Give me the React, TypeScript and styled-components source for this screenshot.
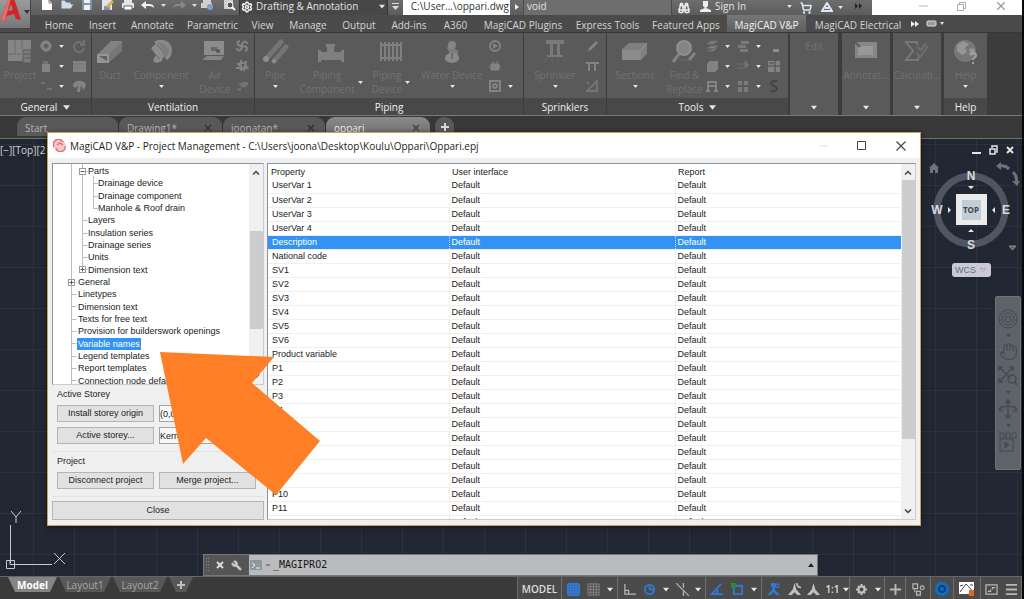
import React from 'react';
import styled, { createGlobalStyle, css } from 'styled-components';
import { Hand, Settings, ShoppingCart, Wrench, Binoculars } from 'lucide-react';

const ui = '"Open Sans", "Noto Sans", sans-serif';
const classic = '"Liberation Sans", Arial, sans-serif';

const GlobalStyle = createGlobalStyle`
  * { box-sizing: border-box; }
  html, body { margin: 0; height: 100%; overflow: hidden; background: #060708; }
  #root { height: 100%; }
  button, input, select { font: inherit; color: inherit; margin: 0; padding: 0; border: 0; background: none; border-radius: 0; }
  button { white-space: nowrap; }
  svg { display: block; flex: none; }
`;

const Shell = styled.div`
  position: relative;
  display: flex;
  flex-direction: column;
  height: 100%;
  margin-right: 2px;
  font-family: ${ui};
  font-size: 10px;
  color: #e2e2e2;
  background: #3a3a3a;
`;

/* ---------- title bar ---------- */
const TitleBar = styled.header`
  display: flex;
  align-items: stretch;
  flex: none;
  height: 15px;
  padding-left: 37px;
  background: linear-gradient(#6d6d6d, #5c5c5c);
  line-height: 13px;
  overflow: hidden;
`;
const AppButton = styled.button`
  position: absolute;
  z-index: 2;
  left: 0;
  top: 0;
  width: 31px;
  height: 29px;
  background: linear-gradient(#9b9b9b, #777);
  border-right: 1px solid #444;
  border-bottom: 1px solid #444;
`;
const Slot = styled.button<{ $w: number }>`
  display: flex;
  align-items: center;
  justify-content: center;
  flex: none;
  width: ${(p) => p.$w}px;
`;
const TitleSlot = styled(Slot)`
  align-items: flex-start;
`;
const Workspace = styled.label`
  display: flex;
  align-items: center;
  gap: 3px;
  width: 149px;
  padding: 0 2px 2px 1px;
  background: #474747;
  border-left: 1px solid #333;
  border-right: 1px solid #333;
  select { flex: 1; min-width: 0; height: 14px; line-height: 13px; appearance: none; outline: 0; }
`;
const FileName = styled.div`
  width: 107px;
  padding-right: 1px;
  background: #fff;
  color: #333;
  text-align: right;
  white-space: nowrap;
`;
const SearchBox = styled.input`
  width: 149px;
  padding: 0 3px 2px;
  background: #6e6e6e;
  border: solid #4a4a4a;
  border-width: 0 1px;
  line-height: 13px;
`;
const Account = styled.button`
  display: flex;
  align-items: center;
  gap: 4px;
  width: 98px;
  padding: 0 2px 2px 4px;
  span { flex: 1; text-align: left; }
`;
const WindowButtons = styled.div`
  display: flex;
  flex: 1;
  justify-content: flex-end;
  padding: 0 1px 3px 0;
  background: #fff;
  color: #aaa;
`;

/* ---------- ribbon ---------- */
const TabRow = styled.nav`
  display: flex;
  flex: none;
  height: 18px;
  padding-left: 37px;
  background: #4b4b4b;
  border-bottom: 1px solid #363636;
`;
const RibbonTab = styled.button<{ $w: number; $on?: boolean }>`
  flex: none;
  width: ${(p) => p.$w}px;
  height: 17px;
  padding-top: 3px;
  line-height: 14px;
  color: #d4d4d4;
  ${(p) => p.$on && css`
    color: #f0f0f0;
    background: linear-gradient(#777, #5e5e5e);
  `}
`;
const Ribbon = styled.section`
  display: flex;
  flex: none;
  height: 83px;
  background: #3c3c3c;
  border-bottom: 1px solid #7a7a7a;
`;
const Panel = styled.section<{ $w: number; $gap?: number }>`
  display: flex;
  flex-direction: column;
  flex: none;
  width: ${(p) => p.$w}px;
  margin-right: ${(p) => p.$gap ?? 1}px;
  background: #5a5a5a;
`;
const PanelBody = styled.div`
  display: flex;
  flex: 1;
  min-height: 0;
  padding-top: 3px;
`;
const PanelTitle = styled.button<{ $plain?: boolean }>`
  display: flex;
  align-items: center;
  justify-content: center;
  gap: 6px;
  flex: none;
  height: 17px;
  padding-top: 1px;
  line-height: 16px;
  color: #f0f0f0;
  background: ${(p) => (p.$plain ? 'none' : '#484848')};
`;
const BigTool = styled.button<{ $w: number }>`
  display: flex;
  flex-direction: column;
  align-items: center;
  gap: 3px;
  flex: none;
  width: ${(p) => p.$w}px;
  padding-top: 3px;
  color: #727272;
  line-height: 14px;
`;
const ToolLabel = styled.span`
  display: flex;
  align-items: center;
  gap: 3px;
`;
const ToolLines = styled.span`
  display: flex;
  flex-direction: column;
`;
const SmallCol = styled.div<{ $w: number }>`
  display: flex;
  flex-direction: column;
  flex: none;
  width: ${(p) => p.$w}px;
  color: #838383;
`;
const SmallTool = styled.button`
  display: flex;
  align-items: center;
  gap: 6px;
  height: 20px;
  color: inherit;
`;

/* ---------- document tabs ---------- */
const DocTabs = styled.nav`
  display: flex;
  align-items: flex-end;
  flex: none;
  height: 23px;
  padding: 0 0 2px 16px;
  background: #383838;
  border-bottom: 1px solid #707070;
`;
const DocTab = styled.button<{ $w: number; $on?: boolean }>`
  display: flex;
  align-items: center;
  justify-content: space-between;
  width: ${(p) => p.$w}px;
  height: 19px;
  padding: 2px 10px 0 8px;
  border-radius: 9px 9px 0 0;
  color: ${(p) => (p.$on ? '#eee' : '#b4b4b4')};
  background: ${(p) => (p.$on ? 'linear-gradient(#8a8a8a, #6f6f6f)' : '#595959')};
  border-left: 1px solid #333;
`;
const AddTab = styled(DocTab)`
  justify-content: center;
  margin-left: 4px;
  padding: 0;
`;

/* ---------- drawing area ---------- */
const Canvas = styled.main`
  position: relative;
  flex: 1;
  min-height: 0;
  background-color: #212732;
  background-image:
    linear-gradient(90deg, #2b323d 1px, transparent 1px),
    linear-gradient(#2b323d 1px, transparent 1px),
    linear-gradient(90deg, #232934 1px, transparent 1px),
    linear-gradient(#232934 1px, transparent 1px);
  background-size: 41px 41px, 41px 41px, 8px 8px, 8px 8px;
  background-position: 33px 5px;
`;
const ViewLabel = styled.div`
  position: absolute;
  left: 0;
  top: 4px;
  line-height: 14px;
  color: #d0d4d8;
`;
const ViewTools = styled.aside`
  position: absolute;
  right: 0;
  top: 5px;
  width: 98px;
  display: flex;
  flex-direction: column;
`;
const MdiButtons = styled.div`
  display: flex;
  justify-content: flex-end;
  gap: 8px;
  padding-right: 8px;
`;
const Wcs = styled.button`
  display: flex;
  align-items: center;
  justify-content: space-between;
  width: 39px;
  height: 14px;
  margin: 0 0 0 28px;
  padding: 0 5px 0 3px;
  border-radius: 3px;
  background: #c9cad6;
  color: #6a6c7a;
  font: 9px/12px ${classic};
`;
const NavBar = styled.nav`
  position: absolute;
  right: 1px;
  top: 157px;
  width: 26px;
  height: 174px;
  display: flex;
  flex-direction: column;
  align-items: center;
  padding-top: 12px;
  gap: 5px;
  color: #434b54;
  background: #5c6369;
  border: 1px solid #6c7379;
  border-radius: 2px;
`;
const Ucs = styled.svg`
  position: absolute;
  left: 4px;
  bottom: 6px;
`;
const CommandLine = styled.form`
  position: absolute;
  left: 203px;
  right: 204px;
  bottom: 0;
  height: 22px;
  display: flex;
  align-items: center;
  gap: 7px;
  padding: 0 3px 0 2px;
  color: #d8d8d8;
  background: linear-gradient(90deg, #555 45px, #b9bbbd 45px);
  border: 1px solid #777;
  input { flex: 1; min-width: 0; outline: 0; margin-left: -5px; color: #151515; font: 10px/18px "DejaVu Sans Mono", monospace; }
`;

/* ---------- bottom bar ---------- */
const BottomBar = styled.footer`
  display: flex;
  justify-content: space-between;
  flex: none;
  height: 23px;
  background: #3a3a3a;
  border-top: 1px solid #666;
`;
const LayoutTabs = styled.nav`
  display: flex;
  padding-left: 8px;
  gap: 2px;
`;
const LayoutTab = styled.button<{ $w: number; $on?: boolean }>`
  display: flex;
  align-items: center;
  justify-content: center;
  width: ${(p) => p.$w}px;
  height: 15px;
  padding-top: 1px;
  line-height: 15px;
  font-weight: ${(p) => (p.$on ? 700 : 400)};
  color: ${(p) => (p.$on ? '#fff' : '#a6a6a6')};
  background: ${(p) => (p.$on ? '#858585' : '#585858')};
  clip-path: polygon(0 0, 100% 0, calc(100% - 7px) 100%, 7px 100%);
`;
const StatusBar = styled.div`
  display: flex;
  align-items: stretch;
  background: #4b4b4b;
  border-left: 1px solid #6a6a6a;
`;
const StatusGroup = styled.div`
  display: flex;
  align-items: stretch;
  padding-top: 2px;
  border-right: 1px solid #6e6e6e;
  font-weight: 600;
  color: #dedede;
`;

/* ---------- dialog ---------- */
const Dialog = styled.section`
  position: absolute;
  z-index: 3;
  left: 47px;
  right: 101px;
  top: 132px;
  bottom: 73px;
  display: flex;
  flex-direction: column;
  border: 1px solid #c3a25a;
  background: #f1f0f0;
  color: #222;
  box-shadow: 0 1px 5px #0008;
  font: 9px/12px ${classic};
`;
const DialogTitle = styled.header`
  display: flex;
  align-items: center;
  flex: none;
  height: 25px;
  padding-left: 5px;
  gap: 4px;
  background: #fff;
  font: 10px/24px ${ui};
  color: #222;
  h1 { flex: 1; margin: 0; font: inherit; white-space: nowrap; }
`;
const DialogButtons = styled.div`
  display: flex;
  align-self: stretch;
`;
const DialogBody = styled.div`
  display: flex;
  flex: 1;
  gap: 3px;
  min-height: 0;
  padding: 5px 4px 5px 4px;
`;
const Side = styled.div`
  display: flex;
  flex-direction: column;
  flex: none;
  width: 212px;
`;
const Framed = styled.div`
  display: flex;
  min-height: 0;
  overflow: hidden;
  background: #fff;
  border: 1px solid #8f939b;
  border-right-color: #c9cbd0;
  border-bottom-color: #c9cbd0;
`;
const TreeFrame = styled(Framed)`
  flex: 1;
`;
const TreeList = styled.ul`
  position: relative;
  display: grid;
  grid-auto-rows: 1fr;
  flex: 1;
  margin: 0 0 -3px;
  padding: 1px 0 0;
  list-style: none;
`;
const Guides = styled.svg`
  position: absolute;
  left: 0;
  top: 0;
`;
const TreeItem = styled.li<{ $depth: number }>`
  display: flex;
  align-items: center;
  min-height: 0;
  padding-left: ${(p) => 24 + p.$depth * 10}px;
`;
const TreeLabel = styled.button<{ $on?: boolean }>`
  padding: 0 1px;
  line-height: 12px;
  ${(p) => p.$on && css`
    background: #3393f5;
    color: #fff;
  `}
`;
const Track = styled.div`
  display: flex;
  flex-direction: column;
  align-items: center;
  flex: none;
  width: 14px;
  background: #f0f0f0;
`;
const Thumb = styled.div<{ $from: number; $size: number }>`
  flex: 0 1 ${(p) => p.$size}px;
  width: 13px;
  margin-top: ${(p) => p.$from}px;
  background: #cdcdcd;
`;
const Chevron = styled.div`
  display: flex;
  align-items: center;
  justify-content: center;
  flex: none;
  height: 16px;
`;
const TrackEnd = styled(Chevron)`
  margin-top: auto;
`;
const Group = styled.fieldset`
  display: grid;
  grid-template-columns: 97px 97px;
  gap: 5px;
  margin: 0;
  padding: 3px 0 7px 5px;
  border: 0;
  border-bottom: 1px solid #e3e3e3;
  legend { float: left; grid-column: 1 / -1; padding: 0; height: 12px; }
`;
const PushButton = styled.button`
  height: 17px;
  line-height: 15px;
  background: #e1e1e1;
  border: 1px solid #b4b4b4;
`;
const CloseButton = styled(PushButton)`
  height: 19px;
  margin-top: 4px;
`;
const Field = styled.input`
  min-width: 0;
  height: 17px;
  border: 1px solid #a0a4ac;
  background: #f7f7f7;
`;
const TableFrame = styled(Framed)`
  flex: 1;
  min-width: 0;
`;
const TableClip = styled.div`
  flex: 1;
  min-width: 0;
  overflow: hidden;
`;
const Table = styled.table`
  width: 100%;
  table-layout: fixed;
  border-collapse: collapse;
  th { height: 15px; padding: 1px 0 0 3px; font-weight: 400; text-align: left; }
  td { height: 14px; padding: 0 0 0 4px; border-bottom: 1px solid #f0f0f0; line-height: 13px; }
  td + td { padding-left: 2px; border-left: 1px dotted #e2e2e2; }
`;
const Row = styled.tr<{ $on?: boolean }>`
  ${(p) => p.$on && css`
    background: #3393f5;
    color: #fff;
  `}
`;
const Pointer = styled.svg`
  position: absolute;
  z-index: 4;
  left: 160px;
  top: 352px;
`;

/* ---------- drawings ---------- */
const Down = ({ c = '#e6e6e6', s = 5 }: { c?: string; s?: number }) => (
  <svg width={s} height={s === 5 ? 3 : 5} viewBox="0 0 8 5" fill={c}><path d="M0 0h8L4 5z" /></svg>
);
const Plus = ({ c = '#d8d8d8' }) => (
  <svg width="8" height="8" viewBox="0 0 8 8" stroke={c} strokeWidth="2"><path d="M4 0v8M0 4h8" /></svg>
);
const Cross = ({ c, s = 8, w = 1.5 }: { c: string; s?: number; w?: number }) => (
  <svg width={s} height={s} viewBox="0 0 8 8" stroke={c} strokeWidth={w}><path d="M1 1l6 6M7 1l-6 6" /></svg>
);
const Arc = ({ up }: { up?: boolean }) => (
  <svg width="8" height="5" viewBox="0 0 8 5" fill="none" stroke="#444" strokeWidth="1.5"><path d={up ? 'M1 4.5l3-3 3 3' : 'M1 .5l3 3 3-3'} /></svg>
);

const big: Record<string, React.ReactNode> = {
  project: <><path d="M2 1h23v21H2z" fill="#858585" /><path d="M9 1v14M2 15h13M16 1v9" stroke="#6c6c6c" /><path d="M17 11h8v13h-8z" fill="#7b7b7b" stroke="#5a5a5a" /><path d="M18 15h6M18 19h6" stroke="#5a5a5a" /></>,
  duct: <><path d="M1 16L15 2h11v10L13 23H1z" fill="#828282" /><path d="M13 15L26 3v9L13 23z" fill="#767676" /><path d="M1 15h12v9H1z" fill="#959595" /><path d="M3 17h8v5z" fill="#606060" /></>,
  comp: <><circle cx="16" cy="10" r="9" fill="#7d7d7d" /><path d="M8 4c7-4 13 0 15 6 1 5-1 8-4 10" fill="none" stroke="#8a8a8a" strokeWidth="3" /><path d="M4 9l6-5 7 8-2 10c-5 3-8 2-9-1l3-5z" fill="#8c8c8c" /><path d="M6 13l7 7M10 6l7 8" stroke="#686868" /></>,
  air: <><path d="M3 2h20v14H3z" fill="#8c8c8c" /><path d="M10 8h6v4h-6z" fill="#676767" /><path d="M6 17h17l-3 4H1z" fill="#858585" /><circle cx="17" cy="12" r="2" fill="#555" /></>,
  pipe: <><path d="M5 20L20 3M13 22L25 8" stroke="#747474" strokeWidth="5" strokeLinecap="round" /><circle cx="5" cy="20" r="3" fill="#8d8d8d" /><circle cx="13" cy="22" r="2" fill="#8d8d8d" /></>,
  pcomp: <path d="M9 5h9v3h-1v5h7v-2h3v12h-3v-2H4v2H1V11h3v2h6V8H9z" fill="#808080" />,
  pdev: <path d="M4 3v19M8 3v19M12 3v19M16 3v19M20 3v19M24 3v19M3 6h22M3 19h22" stroke="#7f7f7f" strokeWidth="2" />,
  water: <><path d="M10 6h7v4l3 2v5h-9v-5l-2-2z" fill="#7e7e7e" /><ellipse cx="14" cy="19" rx="7" ry="5" fill="#8a8a8a" /><circle cx="14" cy="6" r="4" fill="#858585" /><path d="M14 14v6" stroke="#6c6c6c" strokeWidth="2" /></>,
  sprink: <><path d="M5 1h18v4H5zM9 5h3v12H9zM16 5h3v12h-3z" fill="#7a7a7a" /><path d="M6 17h16" stroke="#7a7a7a" strokeWidth="2" /><path d="M3 23l5-4M11 23v-3M17 23v-3M25 23l-4-4" stroke="#6a6a6a" /></>,
  sect: <><path d="M1 10l7-6h18v11l-6 6H1z" fill="#7f7f7f" /><path d="M1 11h19v10H1z" fill="#8b8b8b" /><path d="M20 11l6-7" stroke="#979797" /></>,
  find: <><circle cx="13" cy="9" r="7" fill="#858585" stroke="#8f8f8f" strokeWidth="2" /><path d="M8 15l-6 8M18 21l6-7" stroke="#838383" strokeWidth="3" /><path d="M8 21h12" stroke="#6c6c6c" /></>,
  anno: <><path d="M3 3h22v16H3z" fill="#868686" /><path d="M6 7h15v9H6z" fill="#989898" /><path d="M3 3l5 5" stroke="#5a5a5a" strokeWidth="2" /></>,
  calc: <><path d="M14 6V3H3l7 9-7 9h12v-3" fill="none" stroke="#777" strokeWidth="2" /><path d="M14 14l3 4 8-11M14 8l4 3 5-7" fill="none" stroke="#707070" strokeWidth="2" /></>,
  help: <><circle cx="13" cy="12" r="11" fill="#777" /><path d="M5 6l6-4 6 3-4 4 2 4-5 3-5-4zM17 10l5-1 1 6-4 2z" fill="#959595" /><path d="M18 16c1-3 7-2 6 1-1 2-3 2-3 4M21 23v2" fill="none" stroke="#a2a2a2" strokeWidth="2" /></>,
};
const BigIcon = ({ n }: { n: string }) => <svg width="28" height="26" viewBox="0 0 28 26">{big[n]}</svg>;

const small: Record<string, React.ReactNode> = {
  gear: <><circle cx="6" cy="6" r="4" fill="none" stroke="currentColor" strokeWidth="3" /><path d="M6 0v12M0 6h12M2 2l8 8M10 2l-8 8" stroke="currentColor" /><circle cx="6" cy="6" r="2" fill="#5a5a5a" /></>,
  cyl: <><path d="M2 4h8v8H2z" fill="currentColor" /><path d="M3 1h5v3H3z" fill="#737373" /></>,
  pts: <path d="M1 2h4v2H1zM7 8h5v2H7z" fill="#707070" />,
  redo: <path d="M10 4A5 5 0 1 0 11 8M11 0v5H7" fill="none" stroke="#727272" strokeWidth="2" />,
  sheet: <><path d="M0 1h13v11H0z" fill="currentColor" /><path d="M0 4h13M0 8h13M4 1v11" stroke="#7b7b7b" /></>,
  globe: <path d="M0 6c0-7 13-7 13 0l-3 4-2-5-1 7H4l1-6-3 2z" fill="currentColor" />,
  fan: <path d="M6 6C1 6 0 2 4 1M6 6c0-6 5-5 5-2M6 6c6 0 6 4 3 5M6 6c0 5-5 6-5 2" fill="none" stroke="currentColor" strokeWidth="2" />,
  valve: <path d="M2 4l8-2-2 8zM0 8h12M5 0v11M9 4l3 5" stroke="currentColor" strokeWidth="2" fill="none" />,
  duct: <path d="M2 4l5-2h5v3L8 8zM1 10l4-3v4z" fill="#747474" />,
  pump: <><circle cx="6" cy="6" r="5" fill="none" stroke="currentColor" strokeWidth="2" /><path d="M4 3l5 3-5 3z" fill="currentColor" /></>,
  plug: <path d="M2 4h8v6H2zM4 1v4M8 1v4M0 7h12" fill="currentColor" stroke="currentColor" />,
  box: <><path d="M1 1h10v10H1z" fill="none" stroke="currentColor" strokeWidth="2" /><circle cx="6" cy="6" r="2" fill="none" stroke="currentColor" strokeWidth="2" /></>,
  pen: <path d="M2 11l1-3 7-7 2 2-7 7z" fill="currentColor" />,
  tee: <path d="M0 3h13M3 4v7M9 4v7" stroke="currentColor" strokeWidth="2" />,
  tri: <path d="M1 11L11 1v10zM1 2l2 2" fill="none" stroke="#747474" strokeWidth="2" />,
  layers: <path d="M1 4l4-3h7L8 4zM1 8l4-2h7L8 9zM1 11h7l3-3" fill="currentColor" stroke="#6a6a6a" />,
  cube: <path d="M1 4l3-3h8v8l-3 3H1z" fill="currentColor" />,
  frame: <path d="M2 12V2h8v10M2 6h8M0 11h4M8 11h4" fill="none" stroke="currentColor" strokeWidth="2" />,
  stack: <path d="M4 1h8v3H4zM1 5h8v3H1zM3 9h8v3H3z" fill="#7a7a7a" />,
  arrow: <path d="M0 4h9M0 8h7M8 1l4 4-4 3z" fill="#737373" stroke="#737373" />,
  grid4: <path d="M1 1h4v4H1zM7 1h4v4H7zM1 7h4v5H1zM7 7h4v5H7z" fill="#7a7a7a" />,
  dot: <path d="M5 9h6v3H5z" fill="#8d8d8d" />,
  table: <><path d="M0 1h12v11H0z" fill="currentColor" /><path d="M0 6h12M7 1v11M1 3h5" stroke="#4c4c4c" /></>,
  ess: <path d="M9 1C3 0 1 4 6 6s3 6-3 5" fill="none" stroke="#424242" strokeWidth="2" />,
};
const SmallIcon = ({ n }: { n: string }) => <svg width="13" height="13" viewBox="0 0 13 13">{small[n]}</svg>;

const quick: [number, string, React.ReactNode][] = [
  [20, 'New', <><path d="M2 0h7l3 3v7H2z" fill="#fff" /><path d="M9 0v3h3" stroke="#777" fill="none" /></>],
  [20, 'Open', <path d="M1 0h4l1 2h5v2h3l-3 5H1z" fill="#d5dce6" stroke="#5a6a80" />],
  [20, 'Save', <><path d="M2 0h10v10H2z" fill="#7f93ad" /><path d="M4 0h6v3H4zM4 5h6v5H4z" fill="#eef2f6" /></>],
  [21, 'Save as', <><path d="M2 0h10v10H2z" fill="#dfe5ec" /><path d="M4 6h6v4H4z" fill="#7f93ad" /><path d="M6 6l6-6 2 2-6 6z" fill="#e8a84a" /></>],
  [20, 'Plot', <><path d="M3 0h8v3H3zM1 3h12v5H1z" fill="#e4e4e4" /><path d="M3 6h8v4H3z" fill="#fff" stroke="#667" /></>],
  [20, 'Undo', <path d="M0 5l5-4v3c5 0 8 0 8 4-2-2-4-2-8-2v3z" fill="#f4f4f4" />],
  [10, '', null],
  [22, 'Redo', <path d="M14 5L9 1v3C4 4 1 4 1 8c2-2 4-2 8-2v3z" fill="#888" />],
  [8, '', null],
  [21, 'Batch plot', <><path d="M2 0h8v3H2zM0 3h11v5H0z" fill="#d0d0d0" /><circle cx="9" cy="7" r="3" fill="#7ba0cc" /></>],
  [20, 'Preview', <><path d="M2 0h9v9H2z" fill="#d0d0d0" /><circle cx="8" cy="5" r="3" fill="#555" stroke="#fff" /><path d="M10 7l3 3" stroke="#fff" strokeWidth="2" /></>],
];

const ribbonTabs: [string, number][] = [
  ['Home', 44], ['Insert', 43], ['Annotate', 57], ['Parametric', 63], ['View', 37], ['Manage', 54], ['Output', 48],
  ['Add-ins', 52], ['A360', 41], ['MagiCAD Plugins', 94], ['Express Tools', 75], ['Featured Apps', 82],
  ['MagiCAD V&P', 79], ['MagiCAD Electrical', 104],
];

const Tool = ({ w, icon, lines, menu, side }: { w: number; icon: string; lines: string[]; menu?: boolean; side?: boolean }) => (
  <BigTool $w={w}>
    <BigIcon n={icon} />
    <ToolLabel>
      <ToolLines>{lines.map((l) => <span key={l}>{l}</span>)}</ToolLines>
      {side && <Down />}
    </ToolLabel>
    {menu && <Down />}
  </BigTool>
);
const Smalls = ({ w, items }: { w: number; items: [string, boolean?][] }) => (
  <SmallCol $w={w}>
    {items.map(([n, m]) => <SmallTool key={n} aria-label={n}><SmallIcon n={n} />{m && <Down />}</SmallTool>)}
  </SmallCol>
);

/* depth, label, expander */
const tree: [number, string, string?][] = [
  [1, 'Parts', '-'], [2, 'Drainage device'], [2, 'Drainage component'], [2, 'Manhole & Roof drain'], [1, 'Layers'],
  [1, 'Insulation series'], [1, 'Drainage series'], [1, 'Units'], [1, 'Dimension text', '+'], [0, 'General', '+'],
  [0, 'Linetypes'], [0, 'Dimension text'], [0, 'Texts for free text'], [0, 'Provision for builderswork openings'],
  [0, 'Variable names'], [0, 'Legend templates'], [0, 'Report templates'], [0, 'Connection node defaults'],
];
const rows = [
  'UserVar 1', 'UserVar 2', 'UserVar 3', 'UserVar 4', 'Description', 'National code', 'SV1', 'SV2', 'SV3', 'SV4', 'SV5',
  'SV6', 'Product variable', 'P1', 'P2', 'P3', 'P4', 'P5', 'P6', 'P7', 'P8', 'P9', 'P10', 'P11', 'P12',
];

const rowY = (i: number) => Math.round(7 + i * 12.3) + 0.5;
const guideX = (d: number) => 18.5 + d * 11;
const TreeGuides = () => (
  <Guides width="60" height="222" viewBox="0 0 60 222" fill="none" stroke="#bdbdbd">
    <path d="M18.5 0v222M29.5 0v106M40.5 12v33" />
    {tree.map(([d], i) => <path key={i} d={`M${guideX(d)} ${rowY(i)}h5`} />)}
    {tree.map(([d, , e], i) => e && (
      <g key={i} stroke="#9a9a9a">
        <rect x={guideX(d) - 3} y={rowY(i) - 3} width="6" height="6" fill="#fff" />
        <path d={`M${guideX(d) - 2} ${rowY(i)}h4`} stroke="#555" />
        {e === '+' && <path d={`M${guideX(d)} ${rowY(i) - 2}v4`} stroke="#555" />}
      </g>
    ))}
  </Guides>
);

const person = 'M7 0a2.5 2.5 0 0 1 1 5l1 3 5 5h-4l-3-3-3 3H0l5-5 1-3a2.5 2.5 0 0 1 1-5z';
const compass = 'M7 0l2 7 5 6h-4l-3-3-3 3H0l5-6z';
const StatusIcon = ({ children }: { children: React.ReactNode }) => (
  <svg width="13" height="13" viewBox="0 0 14 14" fill="none" stroke="#b8b8b8" strokeWidth="1.3">{children}</svg>
);
const blue = '#3079d6';
const gridPath = 'M1 1v12M4 1v12M7 1v12M10 1v12M13 1v12M1 1h12M1 4h12M1 7h12M1 10h12M1 13h12';

export default function App() {
  return (
    <Shell>
      <GlobalStyle />
      <AppButton aria-label="Application menu">
        <svg width="30" height="28" viewBox="0 0 30 28">
          <path d="M1 20L9 -2h5l7 22-5-1-2-5-7 2-2 5z" fill="#d3232b" />
          <path d="M8 11l3-7 2 6z" fill="#8b8b8b" />
          <path d="M1 20L9 -2h2L5 21z" fill="#f06a62" />
          <path d="M24 10h6l-3 4z" fill="#333" />
        </svg>
      </AppButton>
      <TitleBar>
        {quick.map(([w, label, art], i) => (
          <TitleSlot key={i} $w={w} aria-label={label || 'More'}>
            {art ? <svg width="15" height="12" viewBox="0 0 15 12">{art}</svg> : <svg width="5" height="8" viewBox="0 0 5 8"><path d="M0 4h5L2.5 7z" fill="#ddd" /></svg>}
          </TitleSlot>
        ))}
        <Workspace>
          <Settings size={12} color="#eee" strokeWidth={3} />
          <select aria-label="Workspace"><option>Drafting &amp; Annotation</option></select>
          <Down s={6} />
        </Workspace>
        <Slot $w={15} aria-label="Customize"><svg width="7" height="9" viewBox="0 0 7 9" fill="#ddd"><path d="M0 0h7v1H0zM0 3h7L3.5 7z" /></svg></Slot>
        <FileName>C:\User...\oppari.dwg</FileName>
        <Slot $w={13} aria-label="Expand search"><svg width="4" height="8" viewBox="0 0 4 8" fill="#eee"><path d="M0 0l4 3-4 3z" /></svg></Slot>
        <SearchBox aria-label="Search" defaultValue="void" />
        <Slot $w={24} aria-label="Find"><Binoculars size={12} color="#eee" strokeWidth={3} /></Slot>
        <Account>
          <svg width="11" height="12" viewBox="0 0 11 12" fill="#eee"><path d="M3 0h5v5L6 7l5 2v2H0V9l5-2-2-2z" /></svg>
          <span>Sign In</span><Down />
        </Account>
        <Slot $w={23} aria-label="Store"><ShoppingCart size={12} color="#dfe8f2" strokeWidth={3} /></Slot>
        <Slot $w={19} aria-label="A360"><svg width="12" height="12" viewBox="0 0 12 12" fill="none" stroke="#dfe8f2" strokeWidth="2"><path d="M6 1l5 8H1zM4 6h4" /></svg></Slot>
        <Slot $w={8} aria-label="More"><Down /></Slot>
        <Slot $w={28} aria-label="Overflow"><svg width="7" height="9" viewBox="0 0 7 9" fill="#222"><path d="M0 0l3 3-3 3zM4 0l3 3-3 3z" /></svg></Slot>
        <WindowButtons>
          <Slot $w={38} aria-label="Minimize"><svg width="9" height="2"><path d="M0 1h9" stroke="#bbb" /></svg></Slot>
          <Slot $w={38} aria-label="Restore"><svg width="9" height="9" viewBox="0 0 9 9" fill="none" stroke="#aaa"><path d="M.5 2.5h6v6h-6zM2.5 2V.5h6v6H7" /></svg></Slot>
          <Slot $w={41} aria-label="Close"><Cross c="#999" s={10} w={1} /></Slot>
        </WindowButtons>
      </TitleBar>

      <TabRow>
        {ribbonTabs.map(([t, w]) => <RibbonTab key={t} $w={w} $on={t === 'MagiCAD V&P'}>{t}</RibbonTab>)}
        <Slot $w={10} aria-label="More tabs"><svg width="8" height="6" viewBox="0 0 8 6" fill="#eee"><path d="M0 0l4 3-4 3zM4 0l4 3-4 3z" /></svg></Slot>
        <Slot $w={30} aria-label="Ribbon display"><svg width="18" height="7" viewBox="0 0 18 7"><rect x="1" y="1" width="9" height="5" rx="1" fill="#999" stroke="#ddd" /><path d="M14 2h4l-2 3z" fill="#ddd" /></svg></Slot>
      </TabRow>

      <Ribbon>
        <Panel $w={91}>
          <PanelBody>
            <Tool w={40} icon="project" lines={['Project']} />
            <Smalls w={33} items={[['gear', true], ['cyl', true], ['pts', true]]} />
            <Smalls w={16} items={[['redo'], ['sheet'], ['globe']]} />
          </PanelBody>
          <PanelTitle>General <Down s={7} /></PanelTitle>
        </Panel>
        <Panel $w={162}>
          <PanelBody>
            <Tool w={36} icon="duct" lines={['Duct']} />
            <Tool w={66} icon="comp" lines={['Component']} menu />
            <Tool w={42} icon="air" lines={['Air', 'Device']} />
            <Smalls w={16} items={[['fan'], ['valve'], ['duct']]} />
          </PanelBody>
          <PanelTitle>Ventilation</PanelTitle>
        </Panel>
        <Panel $w={268}>
          <PanelBody>
            <Tool w={40} icon="pipe" lines={['Pipe']} menu />
            <Tool w={72} icon="pcomp" lines={['Piping', 'Component']} side />
            <Tool w={48} icon="pdev" lines={['Piping', 'Device']} side />
            <Tool w={74} icon="water" lines={['Water Device']} menu />
            <Smalls w={30} items={[['pump'], ['plug'], ['box', true]]} />
          </PanelBody>
          <PanelTitle>Piping</PanelTitle>
        </Panel>
        <Panel $w={82}>
          <PanelBody>
            <Tool w={62} icon="sprink" lines={['Sprinkler']} menu />
            <Smalls w={16} items={[['pen'], ['tee'], ['tri']]} />
          </PanelBody>
          <PanelTitle>Sprinklers</PanelTitle>
        </Panel>
        <Panel $w={181} $gap={2}>
          <PanelBody>
            <Tool w={56} icon="sect" lines={['Sections']} menu />
            <Tool w={43} icon="find" lines={['Find &', 'Replace']} />
            <Smalls w={31} items={[['layers', true], ['cube', true], ['frame', true]]} />
            <Smalls w={31} items={[['stack', true], ['arrow', true], ['grid4', true]]} />
            <Smalls w={16} items={[['dot'], ['table'], ['ess']]} />
          </PanelBody>
          <PanelTitle>Tools <Down s={7} /></PanelTitle>
        </Panel>
        <Panel $w={48} $gap={4}>
          <PanelBody><BigTool $w={48}><ToolLabel>Edit</ToolLabel></BigTool></PanelBody>
          <PanelTitle $plain aria-label="Edit panel"><Down s={6} /></PanelTitle>
        </Panel>
        <Panel $w={48} $gap={3}>
          <PanelBody><Tool w={48} icon="anno" lines={['Annotat...']} /></PanelBody>
          <PanelTitle $plain aria-label="Annotation panel"><Down s={6} /></PanelTitle>
        </Panel>
        <Panel $w={48} $gap={3}>
          <PanelBody><Tool w={48} icon="calc" lines={['Calculati...']} /></PanelBody>
          <PanelTitle $plain aria-label="Calculation panel"><Down s={6} /></PanelTitle>
        </Panel>
        <Panel $w={43}>
          <PanelBody><Tool w={43} icon="help" lines={['Help']} menu /></PanelBody>
          <PanelTitle>Help</PanelTitle>
        </Panel>
      </Ribbon>

      <DocTabs>
        <DocTab $w={102}>Start</DocTab>
        <DocTab $w={104}>Drawing1*<Cross c="#333" /></DocTab>
        <DocTab $w={103}>joonatan*<Cross c="#333" /></DocTab>
        <DocTab $w={105} $on>oppari<Cross c="#444" /></DocTab>
        <AddTab $w={20} aria-label="New drawing"><Plus /></AddTab>
      </DocTabs>

      <Canvas>
        <ViewLabel>[−][Top][2</ViewLabel>
        <ViewTools>
          <MdiButtons>
            <button aria-label="Minimize drawing"><svg width="9" height="12"><path d="M0 9h9" stroke="#e4e4e4" strokeWidth="2" /></svg></button>
            <button aria-label="Restore drawing"><svg width="9" height="12" viewBox="0 0 9 12" fill="none" stroke="#e4e4e4" strokeWidth="1.5"><path d="M1 5h5v5H1zM3 4V2h5v6H7" /></svg></button>
            <button aria-label="Close drawing"><Cross c="#e4e4e4" s={8} w={2} /></button>
          </MdiButtons>
          <svg width="98" height="107" viewBox="924 156 98 107">
            <circle cx="971" cy="210" r="34" fill="none" stroke="#4f5661" strokeWidth="7" />
            <path d="M956 194h31v31h-31z" fill="#ebebeb" />
            <path d="M962 200h19v20h-19z" fill="#c3cdd6" />
            <text x="971" y="213" textAnchor="middle" fontFamily="Open Sans" fontSize="8" fontWeight="700" fill="#3d4650">TOP</text>
            <g fontFamily="Liberation Sans" fontSize="12" fontWeight="700" fill="#d7dade" textAnchor="middle">
              <text x="971" y="180">N</text><text x="971" y="249">S</text><text x="937" y="214">W</text><text x="1006" y="214">E</text>
            </g>
            <path d="M968 186h6l-3 3zM968 232h6l-3-3zM948 207v6l3-3zM995 207v6l-3-3z" fill="#e6e6e6" />
            <path d="M999 166q7-1 10 3M1013 172q5 5 3 11" fill="none" stroke="#6d737c" strokeWidth="3" />
            <path d="M996 166l5-4v8zM1012 181h8l-3 5z" fill="#6d737c" />
            <path d="M1009 246h7l-3.5 4z" fill="#5c626c" stroke="#8b9098" />
            <path d="M929 168l5-5 5 5h-1v5h-3v-3h-2v3h-3v-5z" fill="#6d737c" />
          </svg>
          <Wcs>WCS<svg width="6" height="4" viewBox="0 0 6 4" fill="none" stroke="#a8aab8"><path d="M0 .5h6L3 3.5z" /></svg></Wcs>
        </ViewTools>
        <NavBar>
          <svg width="20" height="20" viewBox="0 0 20 20" fill="none" stroke="currentColor"><circle cx="10" cy="10" r="9" /><circle cx="10" cy="10" r="6" /><circle cx="10" cy="10" r="3" /></svg>
          <Down c="#3f474f" />
          <Hand size={19} strokeWidth={1.5} />
          <svg width="20" height="20" viewBox="0 0 20 20" fill="none" stroke="currentColor" strokeWidth="1.5"><path d="M2 2l10 10M14 2L2 15M1 5V1h4M11 1h4v4M1 12v4h4" /><circle cx="14" cy="13" r="4" /><path d="M17 16l2 3" /></svg>
          <Down c="#3f474f" />
          <svg width="20" height="20" viewBox="0 0 20 20" fill="none" stroke="currentColor" strokeWidth="1.5"><path d="M10 1v18M7 4l3-3 3 3M7 16l3 3 3-3M1 11c3-5 15-5 18 0M4 7l-3 4 4 1M16 7l3 4-4 1" /></svg>
          <Down c="#3f474f" />
          <svg width="18" height="20" viewBox="0 0 18 20" fill="none" stroke="currentColor"><path d="M1 1h4v5H1zM7 1h4v5H7zM13 1h4v5h-4zM1 7h13v12H1z" /><path d="M6 10l4 3-4 3z" fill="currentColor" /></svg>
        </NavBar>
        <Ucs width="62" height="62" viewBox="0 0 62 62" fill="none" stroke="#c6cace">
          <path d="M6.5 17v38M10 56.5h38M2.5 52.5h8v8h-8zM6 52v4.5h4M7 3l5 6 5-6M12 9v6M50 45l11 11M61 45L50 56" />
        </Ucs>
        <CommandLine>
          <svg width="3" height="16" fill="#888"><path d="M0 1h1v1H0zM0 4h1v1H0zM0 7h1v1H0zM0 10h1v1H0zM0 13h1v1H0zM2 1h1v1H2zM2 4h1v1H2zM2 7h1v1H2zM2 10h1v1H2zM2 13h1v1H2z" /></svg>
          <Cross c="#ddd" s={8} w={2} />
          <Wrench size={11} fill="#ccc" color="#ccc" transform="scale(-1 1)" />
          <svg width="22" height="12" viewBox="0 0 22 12"><path d="M1 1h12v10H1z" fill="#8d979c" /><path d="M3 4l3 2-3 3M7 9h4" fill="none" stroke="#eee" /><path d="M17 6h4" stroke="#555" /></svg>
          <input aria-label="Command" defaultValue="_MAGIPRO2" />
          <svg width="6" height="4" viewBox="0 0 6 4" fill="#222"><path d="M0 4l3-4 3 4z" /></svg>
        </CommandLine>
      </Canvas>

      <BottomBar>
        <LayoutTabs>
          <LayoutTab $w={49} $on>Model</LayoutTab>
          <LayoutTab $w={52}>Layout1</LayoutTab>
          <LayoutTab $w={54}>Layout2</LayoutTab>
          <LayoutTab $w={24} aria-label="New layout"><Plus c="#c0c0c0" /></LayoutTab>
        </LayoutTabs>
        <StatusBar>
          <StatusGroup><Slot $w={43}>MODEL</Slot></StatusGroup>
          <StatusGroup>
            <Slot $w={22} aria-label="Grid"><StatusIcon><path d={gridPath} stroke={blue} strokeWidth="2" /></StatusIcon></Slot>
            <Slot $w={18} aria-label="Snap"><StatusIcon><path d={gridPath} stroke="#858585" strokeWidth="1" /></StatusIcon></Slot>
            <Slot $w={15} aria-label="Snap options"><Down s={6} /></Slot>
          </StatusGroup>
          <StatusGroup>
            <Slot $w={22} aria-label="Ortho"><StatusIcon><path d="M2 1v11h12M2 8h4v4" /></StatusIcon></Slot>
            <Slot $w={18} aria-label="Polar"><StatusIcon><g stroke={blue} strokeWidth="2"><circle cx="7" cy="7" r="5" /><path d="M7 7V2M7 7h6" /></g></StatusIcon></Slot>
            <Slot $w={15} aria-label="Polar options"><Down s={6} /></Slot>
            <Slot $w={18} aria-label="Isodraft"><StatusIcon><path d="M0 0l14 14M8 0v5M8 9v5" /></StatusIcon></Slot>
            <Slot $w={14} aria-label="Isodraft options"><Down s={6} /></Slot>
          </StatusGroup>
          <StatusGroup>
            <Slot $w={21} aria-label="Tracking"><StatusIcon><path d="M12 1L2 12h12M8 7v5" stroke={blue} strokeWidth="2" /></StatusIcon></Slot>
            <Slot $w={20} aria-label="Object snap"><StatusIcon><path d="M3 3h9v9H3z" stroke={blue} strokeWidth="2" /><path d="M0 0h5v5H0z" fill="#2d8a35" stroke="none" /></StatusIcon></Slot>
            <Slot $w={14} aria-label="Object snap options"><Down s={6} /></Slot>
          </StatusGroup>
          <StatusGroup>
            <Slot $w={22} aria-label="Annotation visibility"><StatusIcon><path d={person} fill={blue} stroke="none" /><circle cx="11" cy="3" r="2" stroke={blue} /></StatusIcon></Slot>
            <Slot $w={20} aria-label="Auto scale"><StatusIcon><path d={compass} fill="#c0c0c0" stroke="none" /><path d="M9 0l2 4 3 1" strokeWidth="2" /></StatusIcon></Slot>
            <Slot $w={19} aria-label="Annotation scale"><StatusIcon><path d={compass} fill="#c0c0c0" stroke="none" /></StatusIcon></Slot>
            <Slot $w={19}>1:1</Slot>
            <Slot $w={7} aria-label="Scale list"><Down s={6} /></Slot>
          </StatusGroup>
          <StatusGroup>
            <Slot $w={22} aria-label="Workspace switching"><svg width="13" height="13" viewBox="0 0 13 13"><path d="M6.5 1v11M1 6.5h11M3 3l7 7M10 3l-7 7" stroke="#c4c4c4" strokeWidth="2" /><circle cx="6.5" cy="6.5" r="3" fill="#4b4b4b" stroke="#c4c4c4" strokeWidth="2" /></svg></Slot>
            <Slot $w={12} aria-label="Workspace list"><Down s={6} /></Slot>
          </StatusGroup>
          <StatusGroup><Slot $w={20} aria-label="Annotation monitor"><StatusIcon><path d="M7 1v12M1 7h12" strokeWidth="2" /></StatusIcon></Slot></StatusGroup>
          <StatusGroup><Slot $w={24} aria-label="Isolate objects"><StatusIcon><path d="M1 1h5v5H1z" /><circle cx="11" cy="5" r="2" /><path d="M3 7v3M5 9h4v4H5z" /></StatusIcon></Slot></StatusGroup>
          <StatusGroup><Slot $w={22} aria-label="Hardware acceleration"><svg width="16" height="16" viewBox="0 0 16 16"><circle cx="8" cy="8" r="7" fill="#0e6fc4" /><circle cx="8" cy="8" r="3" fill="none" stroke="#0a3f7c" strokeWidth="2" /></svg></Slot></StatusGroup>
          <StatusGroup><Slot $w={26} aria-label="Performance"><svg width="16" height="16" viewBox="0 0 16 16"><path d="M0 1h15v12H0z" fill="#fff" /><path d="M1 11l3-4 3-4 3 3 4 5M1 5l3-1M11 4h3" fill="none" stroke="#444" /><path d="M10 9h5v6h-5z" fill="#e2661d" /></svg></Slot></StatusGroup>
          <StatusGroup>
            <Slot $w={21} aria-label="Clean screen"><StatusIcon><path d="M1 2h12v10H1zM8 7V5h3M6 7v2H3" /></StatusIcon></Slot>
            <Slot $w={19} aria-label="Customization"><StatusIcon><path d="M1 2h12M1 7h12M1 12h12" strokeWidth="2" /></StatusIcon></Slot>
          </StatusGroup>
        </StatusBar>
      </BottomBar>

      <Dialog role="dialog" aria-label="Project Management">
        <DialogTitle>
          <svg width="13" height="13" viewBox="0 0 13 13" fill="none"><circle cx="6.5" cy="6.5" r="6" fill="#f8c6c6" /><path d="M1 8a5 5 0 0 1 9-5M3 9a4 4 0 0 0 9-2M4 6l3-2 3 2" stroke="#e2707a" strokeWidth="1.5" /></svg>
          <h1>MagiCAD V&amp;P - Project Management - C:\Users\joona\Desktop\Koulu\Oppari\Oppari.epj</h1>
          <DialogButtons>
            <Slot $w={34} aria-label="Minimize dialog"><svg width="9" height="2"><path d="M0 1h9" stroke="#ddd" /></svg></Slot>
            <Slot $w={42} aria-label="Maximize dialog"><svg width="9" height="9"><path d="M.5.5h8v8h-8z" fill="none" stroke="#444" /></svg></Slot>
            <Slot $w={38} aria-label="Close dialog"><Cross c="#444" s={12} w={0.8} /></Slot>
          </DialogButtons>
        </DialogTitle>
        <DialogBody>
          <Side>
            <TreeFrame>
              <TreeList>
                <TreeGuides />
                {tree.map(([d, t], i) => (
                  <TreeItem key={i} $depth={d}><TreeLabel $on={t === 'Variable names'}>{t}</TreeLabel></TreeItem>
                ))}
              </TreeList>
              <Track><Chevron><Arc up /></Chevron><Thumb $from={51} $size={98} /><TrackEnd><Arc /></TrackEnd></Track>
            </TreeFrame>
            <Group>
              <legend>Active Storey</legend>
              <PushButton>Install storey origin</PushButton>
              <Field aria-label="Storey origin" defaultValue="(0,0,0)" />
              <PushButton>Active storey...</PushButton>
              <Field aria-label="Active storey" defaultValue="Kerros" />
            </Group>
            <Group>
              <legend>Project</legend>
              <PushButton>Disconnect project</PushButton>
              <PushButton>Merge project...</PushButton>
            </Group>
            <CloseButton>Close</CloseButton>
          </Side>
          <TableFrame>
            <TableClip>
              <Table>
                <colgroup><col width="181" /><col width="226" /><col /></colgroup>
                <thead><tr><th>Property</th><th>User interface</th><th>Report</th></tr></thead>
                <tbody>
                  {rows.map((r) => <Row key={r} $on={r === 'Description'}><td>{r}</td><td>Default</td><td>Default</td></Row>)}
                </tbody>
              </Table>
            </TableClip>
            <Track><Chevron><Arc up /></Chevron><Thumb $from={0} $size={259} /><TrackEnd><Arc /></TrackEnd></Track>
          </TableFrame>
        </DialogBody>
      </Dialog>
      <Pointer width="162" height="144" viewBox="160 352 162 144"><path d="M160 352L274 357L252 383L320 441L276 495L206 438L183 464z" fill="#ff7f27" /></Pointer>
    </Shell>
  );
}
